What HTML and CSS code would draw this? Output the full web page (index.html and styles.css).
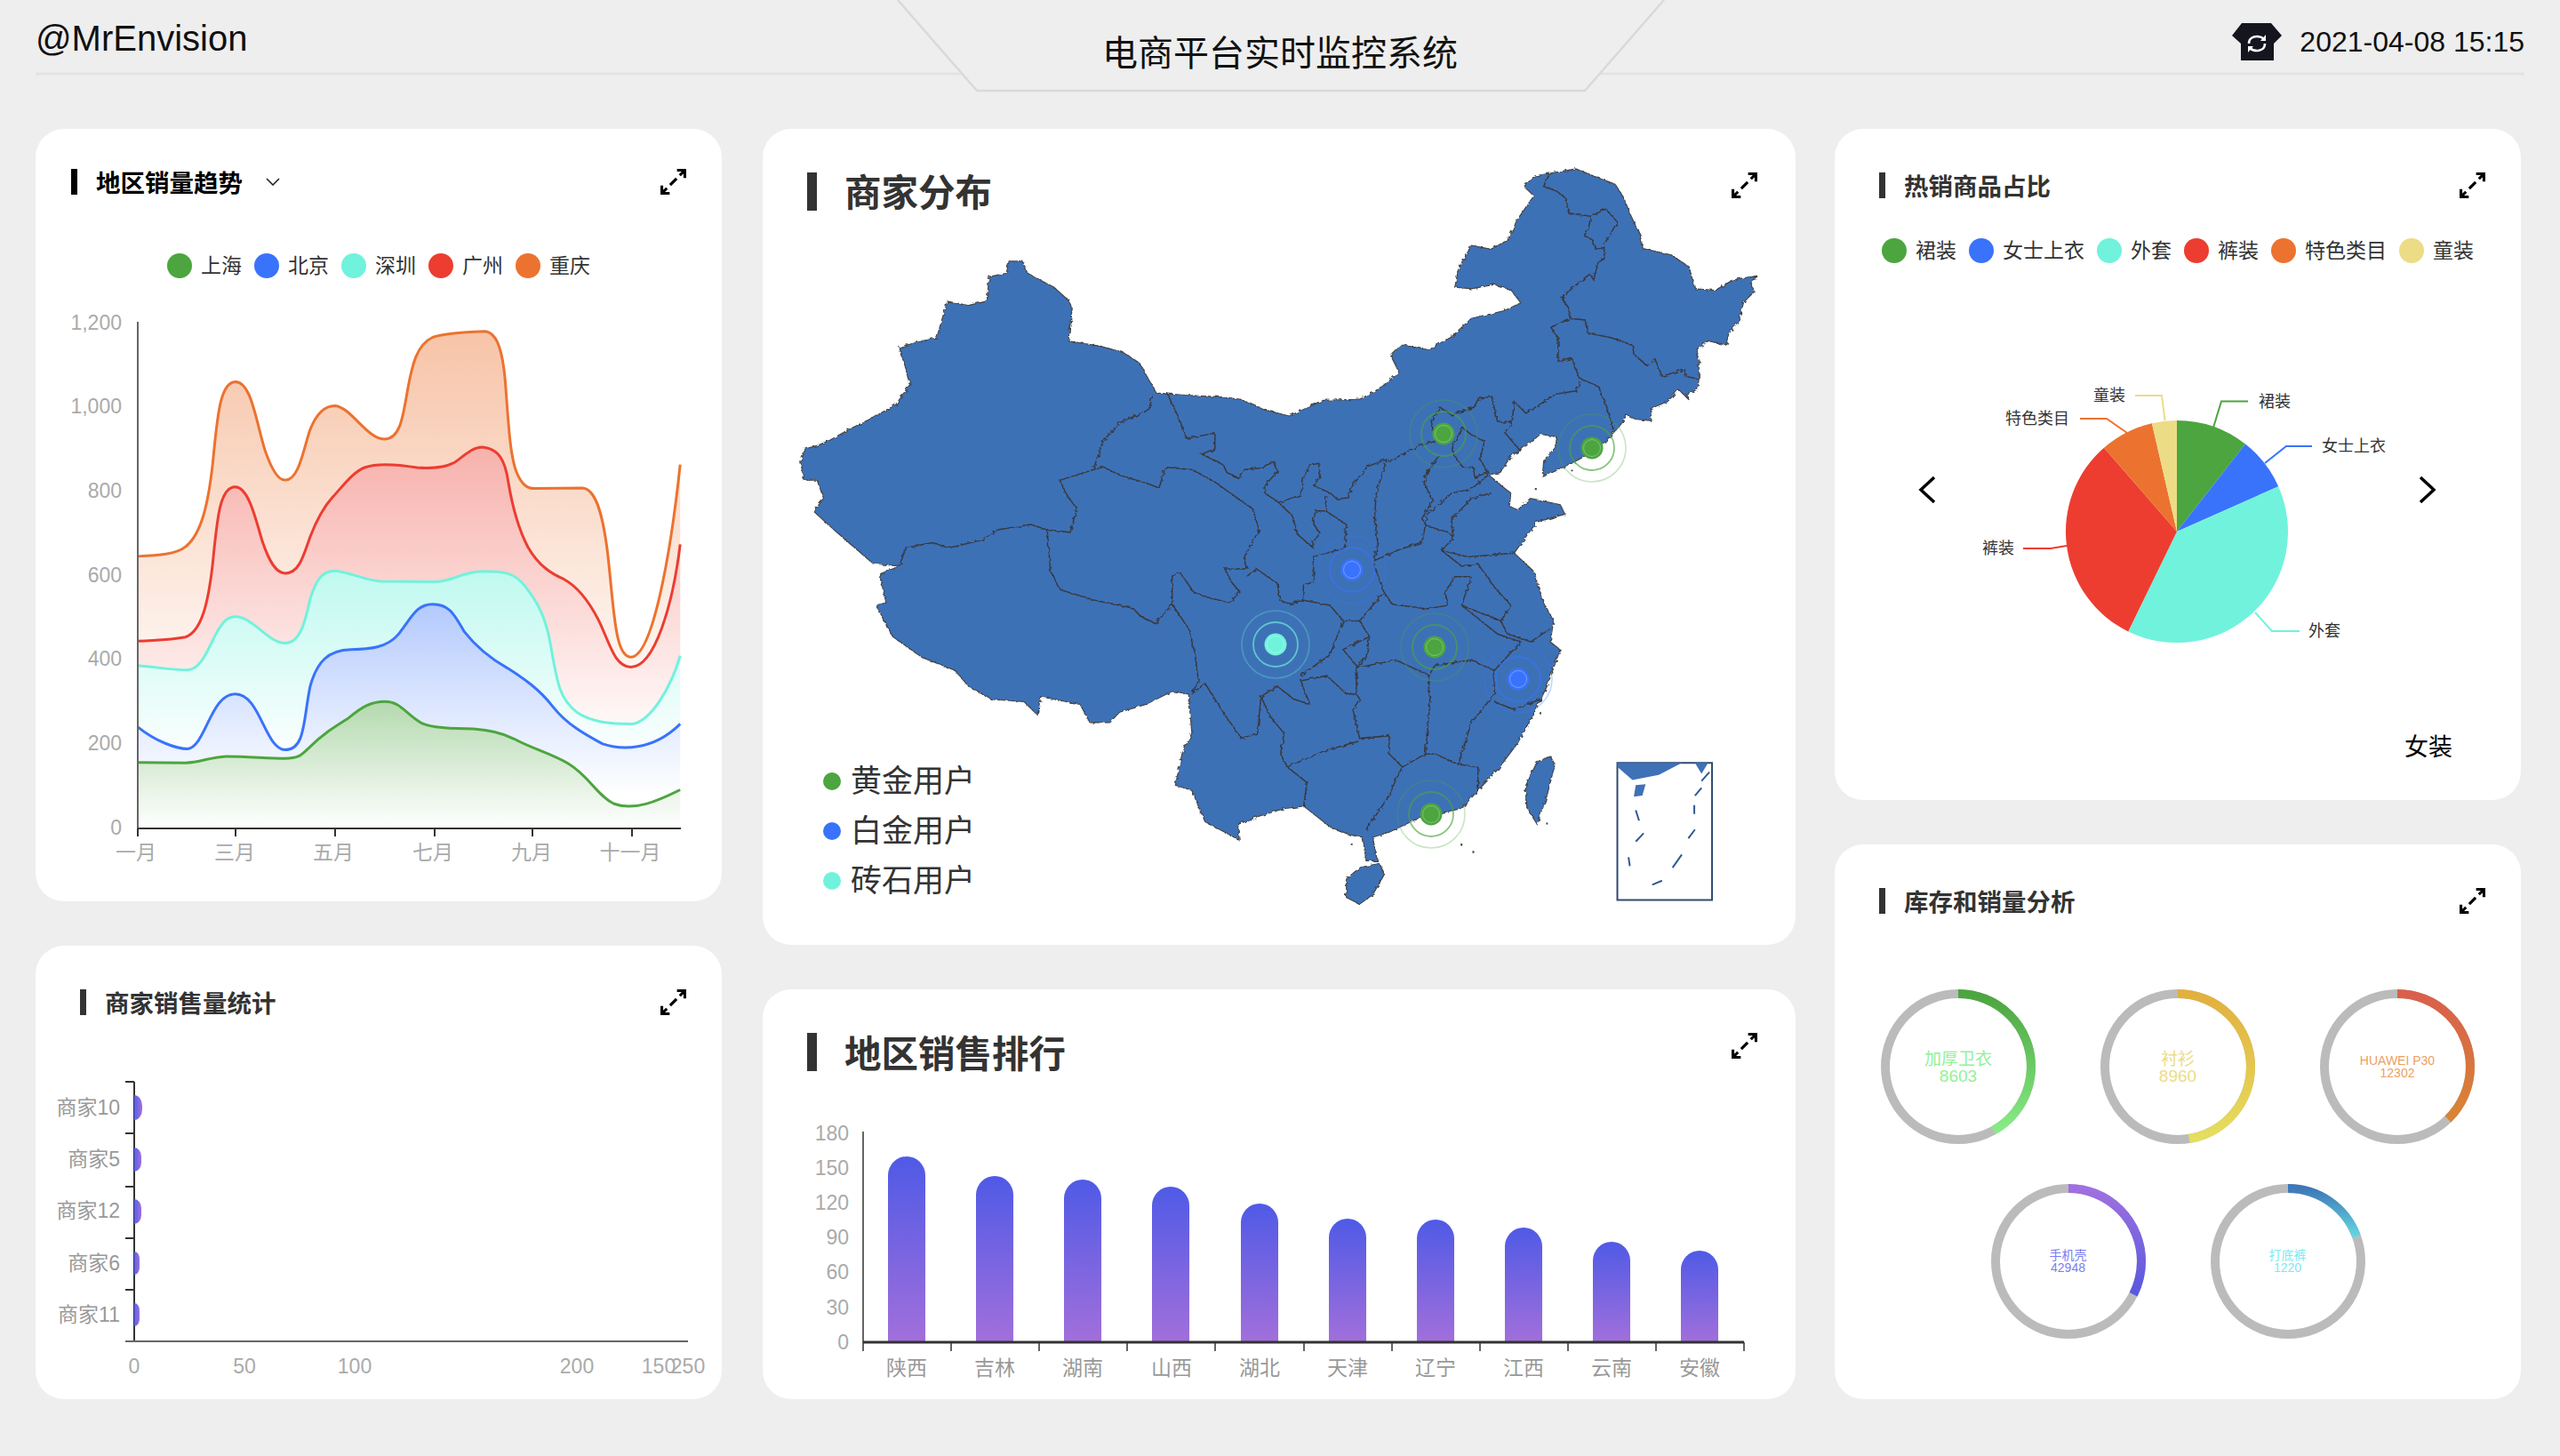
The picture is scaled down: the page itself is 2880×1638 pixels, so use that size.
FILE: index.html
```html
<!DOCTYPE html>
<html lang="zh-CN">

<head>
    <meta charset="UTF-8" />
    <title>电商平台实时监控系统</title>
    <link rel="stylesheet" href="styles.css">
</head>

<body>
    <!-- Shared icons -->
    <svg class="sprite" width="0" height="0">
        <defs>
            <symbol id="icon-expand" viewBox="0 0 28 28">
                <path d="M18 1.500H26.500V10M26 2L21 7M17.500 10.500L10.500 17.500M7 21L2 26M1.500 18V26.500H10" fill="none" stroke="#000" stroke-width="3" />
            </symbol>
            <g id="ripple">
                <circle r="38" fill="none" stroke="currentColor" stroke-width="1.600" opacity=".3" />
                <circle r="25" fill="none" stroke="currentColor" stroke-width="1.800" opacity=".65" />
                <circle r="12.500" fill="currentColor" />
                <circle r="9.500" fill="none" stroke="#fff" stroke-width="1" opacity=".3" />
            </g>
            <filter id="rough" x="-2%" y="-2%" width="104%" height="104%">
                <feTurbulence type="fractalNoise" baseFrequency=".14" numOctaves="2" seed="4" />
                <feDisplacementMap in="SourceGraphic" scale="7" />
            </filter>
        </defs>
    </svg>

    <!-- Top bar -->
    <header class="topbar">
        <svg class="topbar-lines" viewBox="0 0 2880 145">
            <path class="topbar-rule" d="M40 83H1082" />
            <path class="topbar-rule" d="M1800 83H2840" />
            <path class="topbar-frame" d="M1010 0L1099 102H1783L1872 0" />
        </svg>
        <div class="brand">@MrEnvision</div>
        <h1 class="page-title">电商平台实时监控系统</h1>
        <div class="clock">
            <svg class="shirt" viewBox="0 0 56 42">
                <path d="M11 0H44L56 14L47 23V42H10V23L0 14Z" fill="#15151f" />
                <path d="M19 23C19 17 24 15 28 15C31 15 34 16 36 18M37 23C37 29 32 31 28 31C25 31 22 30 20 28" fill="none" stroke="#fff" stroke-width="2.600" />
                <path d="M38 13V20H32Z M18 33V26H24Z" fill="#fff" />
            </svg>
            <span>2021-04-08 15:15</span>
        </div>
    </header>

    <main class="dashboard">
        <!-- Left column -->
        <section class="column">
            <div class="card card-trend">
                <div class="card-head head-black">
                    <h2 class="card-title">地区销量趋势</h2>
                    <svg class="chevron" viewBox="0 0 16 9">
                        <path d="M1 1L8 8L15 1" fill="none" stroke="#222" stroke-width="1.600" />
                    </svg>
                    <svg class="expand"><use href="#icon-expand" /></svg>
                </div>
                <ul class="legend legend-trend">
                    <li><i class="dot green"></i>上海</li>
                    <li><i class="dot blue"></i>北京</li>
                    <li><i class="dot cyan"></i>深圳</li>
                    <li><i class="dot red"></i>广州</li>
                    <li><i class="dot orange"></i>重庆</li>
                </ul>
                <svg class="chart chart-trend" viewBox="40 340 772 650">
                    <defs>
                        <linearGradient id="area-orange" x1="0" y1="0" x2="0" y2="1">
                            <stop offset="0" stop-color="#ec722f" stop-opacity=".42" />
                            <stop offset=".8" stop-color="#ec722f" stop-opacity="0" />
                        </linearGradient>
                        <linearGradient id="area-red" x1="0" y1="0" x2="0" y2="1">
                            <stop offset="0" stop-color="#ec3d30" stop-opacity=".4" />
                            <stop offset=".8" stop-color="#ec3d30" stop-opacity="0" />
                        </linearGradient>
                        <linearGradient id="area-cyan" x1="0" y1="0" x2="0" y2="1">
                            <stop offset="0" stop-color="#71f2dc" stop-opacity=".45" />
                            <stop offset=".75" stop-color="#71f2dc" stop-opacity="0" />
                        </linearGradient>
                        <linearGradient id="area-blue" x1="0" y1="0" x2="0" y2="1">
                            <stop offset="0" stop-color="#3973fb" stop-opacity=".38" />
                            <stop offset=".85" stop-color="#3973fb" stop-opacity="0" />
                        </linearGradient>
                        <linearGradient id="area-green" x1="0" y1="0" x2="0" y2="1">
                            <stop offset="0" stop-color="#4ca53f" stop-opacity=".42" />
                            <stop offset="1" stop-color="#4ca53f" stop-opacity="0" />
                        </linearGradient>
                        <path id="a5" d="M245 864C290 862 330 860 350 845C385 820 400 760 410 680C420 590 425 515 460 514C495 514 505 590 525 650C540 690 555 712 570 711C600 712 610 650 625 610C640 575 660 562 680 562C715 565 750 628 788 629C825 630 830 580 840 530C850 480 860 440 895 425C925 416 975 414 1010 413C1040 415 1050 460 1055 510C1062 590 1065 660 1080 695C1092 722 1105 728 1120 728L1225 727C1255 728 1270 780 1280 850C1295 960 1295 1065 1332 1066C1380 1066 1420 860 1441 680V1409H245Z" />
                        <path id="a4" d="M245 1034C280 1033 320 1031 350 1026C385 1015 400 960 410 880C420 790 425 725 460 725C490 726 505 790 520 835C535 875 550 898 570 898C600 898 610 865 625 825C640 790 655 765 675 745C700 720 720 695 745 686C775 676 820 680 860 686C890 688 920 688 945 675C970 658 985 645 1005 645C1040 648 1055 670 1062 715C1072 770 1085 810 1105 845C1130 885 1160 900 1185 910C1215 925 1240 955 1260 990C1285 1035 1295 1085 1332 1086C1385 1086 1425 960 1441 840V1409H245Z" />
                        <path id="a3" d="M245 1083C285 1086 325 1092 355 1092C385 1090 400 1050 420 1015C435 992 445 985 460 985C500 985 530 1037 570 1038C600 1038 612 1005 625 950C640 905 655 893 680 893C710 895 745 912 780 914L900 915C940 914 960 895 1005 894C1050 894 1075 895 1100 925C1130 960 1145 990 1155 1040C1170 1120 1175 1150 1215 1178C1250 1198 1290 1200 1335 1200C1375 1195 1420 1130 1441 1063V1409H245Z" />
                        <path id="a2" d="M245 1206C285 1235 330 1250 355 1250C395 1245 405 1140 460 1140C515 1140 525 1250 570 1252C615 1252 610 1190 625 1125C640 1075 665 1052 715 1051C755 1050 795 1048 820 1020C850 985 860 960 895 960C935 960 945 985 965 1015C995 1050 1025 1070 1060 1088C1095 1108 1130 1130 1160 1165C1195 1205 1240 1225 1270 1240C1310 1252 1380 1255 1441 1200V1409H245Z" />
                        <path id="a1" d="M245 1277L350 1278C385 1277 400 1267 440 1265C490 1265 530 1269 570 1269C600 1269 605 1262 620 1250C650 1222 680 1205 710 1188C740 1165 760 1155 790 1155C825 1155 835 1180 870 1198C900 1210 950 1209 985 1210C1020 1213 1045 1217 1075 1230C1115 1250 1160 1260 1195 1280C1240 1305 1260 1345 1295 1360C1340 1375 1390 1355 1441 1332V1409H245Z" />
                    </defs>

                    <g transform="translate(30 140) scale(.5102 .5612)">
                        <use href="#a5" fill="#fff" />
                        <use href="#a5" fill="url(#area-orange)" />
                        <path class="series orange-line" d="M245 864C290 862 330 860 350 845C385 820 400 760 410 680C420 590 425 515 460 514C495 514 505 590 525 650C540 690 555 712 570 711C600 712 610 650 625 610C640 575 660 562 680 562C715 565 750 628 788 629C825 630 830 580 840 530C850 480 860 440 895 425C925 416 975 414 1010 413C1040 415 1050 460 1055 510C1062 590 1065 660 1080 695C1092 722 1105 728 1120 728L1225 727C1255 728 1270 780 1280 850C1295 960 1295 1065 1332 1066C1380 1066 1420 860 1441 680" />

                        <use href="#a4" fill="#fff" />
                        <use href="#a4" fill="url(#area-red)" />
                        <path class="series red-line" d="M245 1034C280 1033 320 1031 350 1026C385 1015 400 960 410 880C420 790 425 725 460 725C490 726 505 790 520 835C535 875 550 898 570 898C600 898 610 865 625 825C640 790 655 765 675 745C700 720 720 695 745 686C775 676 820 680 860 686C890 688 920 688 945 675C970 658 985 645 1005 645C1040 648 1055 670 1062 715C1072 770 1085 810 1105 845C1130 885 1160 900 1185 910C1215 925 1240 955 1260 990C1285 1035 1295 1085 1332 1086C1385 1086 1425 960 1441 840" />

                        <use href="#a3" fill="#fff" />
                        <use href="#a3" fill="url(#area-cyan)" />
                        <path class="series cyan-line" d="M245 1083C285 1086 325 1092 355 1092C385 1090 400 1050 420 1015C435 992 445 985 460 985C500 985 530 1037 570 1038C600 1038 612 1005 625 950C640 905 655 893 680 893C710 895 745 912 780 914L900 915C940 914 960 895 1005 894C1050 894 1075 895 1100 925C1130 960 1145 990 1155 1040C1170 1120 1175 1150 1215 1178C1250 1198 1290 1200 1335 1200C1375 1195 1420 1130 1441 1063" />

                        <use href="#a2" fill="#fff" />
                        <use href="#a2" fill="url(#area-blue)" />
                        <path class="series blue-line" d="M245 1206C285 1235 330 1250 355 1250C395 1245 405 1140 460 1140C515 1140 525 1250 570 1252C615 1252 610 1190 625 1125C640 1075 665 1052 715 1051C755 1050 795 1048 820 1020C850 985 860 960 895 960C935 960 945 985 965 1015C995 1050 1025 1070 1060 1088C1095 1108 1130 1130 1160 1165C1195 1205 1240 1225 1270 1240C1310 1252 1380 1255 1441 1200" />

                        <use href="#a1" fill="#fff" />
                        <use href="#a1" fill="url(#area-green)" />
                        <path class="series green-line" d="M245 1277L350 1278C385 1277 400 1267 440 1265C490 1265 530 1269 570 1269C600 1269 605 1262 620 1250C650 1222 680 1205 710 1188C740 1165 760 1155 790 1155C825 1155 835 1180 870 1198C900 1210 950 1209 985 1210C1020 1213 1045 1217 1075 1230C1115 1250 1160 1260 1195 1280C1240 1305 1260 1345 1295 1360C1340 1375 1390 1355 1441 1332" />
                    </g>

                    <path class="axis-y" d="M155 361V931" />
                    <path class="axis-x" d="M155 931H766M155 931V940M265 931V940M377 931V940M489 931V940M599 931V940M711 931V940" />

                    <g class="label-end">
                        <text x="137" y="362">1,200</text>
                        <text x="137" y="456">1,000</text>
                        <text x="137" y="551">800</text>
                        <text x="137" y="646">600</text>
                        <text x="137" y="740">400</text>
                        <text x="137" y="835">200</text>
                        <text x="137" y="930">0</text>
                    </g>
                    <g class="label-mid">
                        <text x="153" y="958">一月</text>
                        <text x="264" y="958">三月</text>
                        <text x="375" y="958">五月</text>
                        <text x="487" y="958">七月</text>
                        <text x="598" y="958">九月</text>
                        <text x="709" y="958">十一月</text>
                    </g>
                </svg>
            </div>

            <div class="card card-sellers">
                <div class="card-head head-inset">
                    <h2 class="card-title">商家销售量统计</h2>
                    <svg class="expand"><use href="#icon-expand" /></svg>
                </div>
                <svg class="chart chart-sellers" viewBox="40 1160 772 400">
                    <defs>
                        <linearGradient id="bar-h" x1="0" y1="0" x2="1" y2="0">
                            <stop offset="0" stop-color="#5660e6" />
                            <stop offset="1" stop-color="#a06fdf" />
                        </linearGradient>
                    </defs>
                    <path class="axis-dark" d="M151 1217V1509M141 1217H151M141 1275H151M141 1335H151M141 1393H151M141 1451H151M141 1509H151" />
                    <path class="axis-gray" d="M141 1509H774" />
                    <path fill="url(#bar-h)" d="M151 1232A9 12 0 0 1 160 1244V1248A9 12 0 0 1 151 1260Z" />
                    <path fill="url(#bar-h)" d="M151 1291A8 10 0 0 1 159 1301V1308A8 10 0 0 1 151 1318Z" />
                    <path fill="url(#bar-h)" d="M151 1349A8 10 0 0 1 159 1359V1367A8 10 0 0 1 151 1377Z" />
                    <path fill="url(#bar-h)" d="M151 1408A6 8 0 0 1 157 1416V1426A6 8 0 0 1 151 1434Z" />
                    <path fill="url(#bar-h)" d="M151 1466A6 8 0 0 1 157 1474V1484A6 8 0 0 1 151 1492Z" />
                    <g class="label-end label-dim">
                        <text x="135" y="1246">商家10</text>
                        <text x="135" y="1304">商家5</text>
                        <text x="135" y="1362">商家12</text>
                        <text x="135" y="1421">商家6</text>
                        <text x="135" y="1479">商家11</text>
                    </g>
                    <g class="label-mid">
                        <text x="151" y="1537">0</text>
                        <text x="275" y="1537">50</text>
                        <text x="399" y="1537">100</text>
                        <text x="649" y="1537">200</text>
                        <text x="741" y="1537">150</text>
                        <text x="774" y="1537">250</text>
                    </g>
                </svg>
            </div>
        </section>

        <!-- Centre column -->
        <section class="column column-mid">
            <div class="card card-map">
                <svg class="map" viewBox="858 145 1162 918">
                    <g transform="translate(860 150) scale(.7398 .5867)">
                        <g filter="url(#rough)">
                            <path class="land" d="M55 630L62 605L82 598L100 588L128 568L165 545L200 520L222 480L205 410L240 398L262 392L278 322L310 330L338 322L342 275L368 268L372 245L392 245L400 268L425 285L440 295L462 320L468 335L462 398L510 408L545 420L570 440L596 498L640 502L690 505L725 510L760 530L798 542L850 512L905 510L935 490L965 458L952 425L968 405L1010 415L1045 390L1075 355L1125 340L1150 325L1135 300L1110 290L1075 298L1050 295L1055 262L1075 215L1105 222L1130 205L1145 165L1170 120L1155 102L1171 82L1194 77L1234 68L1261 82L1293 97L1306 122L1318 159L1331 193L1336 221L1379 233L1406 256L1415 298L1446 301L1473 281L1511 273L1500 284L1505 304L1489 324L1482 358L1466 386L1462 406L1435 398L1417 415L1421 437L1421 471L1419 491L1401 500L1406 511L1390 491L1374 514L1347 528L1349 551L1324 548L1311 540L1302 559L1291 574L1270 602L1239 625L1207 645L1183 659L1185 628L1203 602L1205 582L1180 577L1149 608L1135 619L1119 650L1101 655L1125 680L1135 690L1133 715L1145 722L1165 700L1210 712L1218 730L1175 745L1160 770L1140 805L1170 840L1185 900L1200 935L1195 975L1210 990L1190 1060L1175 1100L1145 1170L1115 1220L1085 1260L1060 1295L1000 1310L950 1340L925 1350L932 1395L915 1395L910 1350L890 1345L860 1330L820 1290L790 1295L750 1310L720 1325L722 1355L700 1340L670 1320L650 1260L625 1250L635 1190L650 1150L645 1075L620 1070L580 1095L540 1110L525 1130L495 1130L480 1095L420 1080L415 1115L395 1090L345 1085L310 1060L290 1030L240 1005L195 965L170 905L185 900L175 845L205 830L165 825L110 765L75 725L90 700L80 665L60 665Z" />
                            <path class="land" d="M1195 1195L1202 1210L1190 1270L1175 1325L1158 1290L1158 1250L1175 1205Z" />
                            <path class="land" d="M935 1400L943 1420L925 1460L905 1478L885 1465L885 1430L905 1408Z" />

                            <!-- Province borders, north to south -->
                            <path class="border" d="M1194 77L1185 102L1205 111L1219 125L1223 153L1257 159L1252 187L1246 196L1259 204L1264 222L1277 219L1277 241L1268 247L1261 281L1255 270L1232 293L1212 315L1223 335L1225 355L1248 358L1252 383L1288 392L1320 406L1322 423L1342 446L1354 432L1365 466L1399 452L1401 466L1421 471" />
                            <path class="border" d="M1257 159L1279 145L1297 170L1277 213" />
                            <path class="border" d="M1225 355L1196 372L1207 392L1207 437L1228 432L1239 469L1243 471L1268 486L1282 528L1291 568" />
                            <path class="border" d="M1241 477L1234 494L1203 500L1158 537L1140 514L1137 554L1126 574L1149 608" />
                            <path class="border" d="M1137 554L1115 554L1106 505L1086 508L1079 525L1045 540L1027 525L1014 551L1020 591L1000 596L948 630" />
                            <path class="border" d="M1045 600L1062 565L1075 578L1095 590L1088 625L1100 650L1080 660L1078 640L1062 640L1050 620Z" />
                            <path class="border" d="M1025 619L1002 659L1012 645L1003 670L1016 704L1000 738L1005 752" />
                            <path class="border" d="M1005 752L1040 765L1048 775L1030 800L1060 830L1085 825L1110 870L1135 905L1120 935L1130 960L1165 975L1195 950" />
                            <path class="border" d="M1005 752L1008 730L1045 690L1075 682L1101 655" />
                            <path class="border" d="M1048 775L1045 740L1075 700L1105 690" />
                            <path class="border" d="M1070 812L1140 805M1030 800L1070 812" />
                            <path class="border" d="M612 498L630 545L642 585L685 575L685 605L665 615L698 636L703 650L721 662L728 645L752 642L775 630L780 648L761 676L761 690L782 708L816 693L820 659L829 636L843 633L845 656L836 676L861 690L870 701L888 699L894 676L917 639L946 625L930 693L928 738L933 790L926 820L966 798L1000 784L1005 752" />
                            <path class="border" d="M782 708L804 735L809 767L834 795L834 784L845 767L834 747L838 724L854 724L854 696" />
                            <path class="border" d="M854 724L885 750L883 790L885 795L843 809L834 812L836 860L820 866L818 895L798 903L784 895L780 863L748 835L734 849" />
                            <path class="border" d="M590 500L585 530L540 555L515 590L500 645L450 665L458 690L475 720L465 765L430 760L405 750L355 760L330 780L280 795L255 785L215 795L205 830" />
                            <path class="border" d="M500 645L515 640L545 658L580 670L600 680L610 640L650 645L683 667L743 721L752 761L730 812L734 835L700 835L710 860L723 880L707 900L680 892L653 880L631 841L620 849L620 903L595 940L572 926L560 910L500 895L450 875L435 840L430 760" />
                            <path class="border" d="M620 903L645 950L655 1000L660 1050L650 1075L670 1055L695 1105L725 1160L750 1150L755 1080L780 1060L805 1085L830 1095L815 1050L855 1040L885 1075L900 1075L905 1085L895 1105L905 1160L950 1155L950 1190L970 1215L1005 1190L1020 1190L1055 1210L1060 1190L1075 1130L1110 1075L1110 1030L1075 1010L1020 1020L1010 1040L1012 1090L1005 1190" />
                            <path class="border" d="M926 824L942 880L955 903L1007 912L1040 905L1035 880L1050 850L1075 850L1060 905L1120 935" />
                            <path class="border" d="M818 895L860 905L880 935L905 935L920 965L880 990L900 1020L900 1075M880 935L860 1000L815 1040" />
                            <path class="border" d="M905 935L942 880M920 965L915 1005L900 1025L960 1010L1012 1040" />
                            <path class="border" d="M1060 905L1115 960L1150 975L1110 1030M1110 1090L1140 1105L1180 1085" />
                            <path class="border" d="M770 1120L790 1150L785 1190L795 1215L850 1185L905 1165M795 1215L825 1245L820 1290M755 1080L770 1120" />
                            <path class="border" d="M970 1215L960 1240L950 1270L915 1335M1055 1210L1085 1215L1085 1260" />
                        </g>

                        <!-- Small islands along the coast -->
                        <path class="islets" d="M1173 680V684M1228 645V648M1210 990V994M1205 1010V1014M1198 1032V1036M1180 1110V1114M1060 1362V1366M1078 1376V1380M1190 1322V1325M893 1362V1365" />

                        <!-- South China Sea inset -->
                        <rect class="inset-box" x="1297" y="1207" width="144" height="263" />
                        <path class="land-flat" d="M1297 1215L1320 1240L1360 1230L1395 1207H1297Z M1415 1207L1425 1228L1435 1207Z M1325 1250L1340 1248L1335 1270L1322 1272Z" />
                        <path class="inset-dash" d="M1425 1242L1437 1225M1425 1255L1415 1270M1414 1288V1305M1415 1335L1405 1352M1395 1383L1381 1408M1365 1433L1350 1441M1314 1388L1316 1405M1325 1298L1330 1318M1337 1342L1325 1358" />
                    </g>

                    <use href="#ripple" x="1624" y="488" class="green-mark" />
                    <use href="#ripple" x="1791" y="504" class="green-mark" />
                    <use href="#ripple" x="1614" y="728" class="green-mark" />
                    <use href="#ripple" x="1610" y="916" class="green-mark" />
                    <use href="#ripple" x="1521" y="641" class="blue-mark" />
                    <use href="#ripple" x="1708" y="764" class="blue-mark" />
                    <use href="#ripple" x="1435" y="725" class="cyan-mark" />
                </svg>

                <div class="card-head head-big">
                    <h2 class="card-title">商家分布</h2>
                    <svg class="expand"><use href="#icon-expand" /></svg>
                </div>

                <ul class="map-legend">
                    <li><i class="dot-sm green"></i>黄金用户</li>
                    <li><i class="dot-sm blue"></i>白金用户</li>
                    <li><i class="dot-sm cyan"></i>砖石用户</li>
                </ul>
            </div>

            <div class="card card-rank">
                <div class="card-head head-big">
                    <h2 class="card-title">地区销售排行</h2>
                    <svg class="expand"><use href="#icon-expand" /></svg>
                </div>
                <svg class="chart chart-rank" viewBox="858 1225 1162 335">
                    <defs>
                        <linearGradient id="bar-v" x1="0" y1="0" x2="0" y2="1">
                            <stop offset="0" stop-color="#4f5ae6" />
                            <stop offset="1" stop-color="#a26fdb" />
                        </linearGradient>
                    </defs>
                    <path fill="url(#bar-v)" d="M999 1511V1323A21 21 0 0 1 1041 1323V1511Z" />
                    <path fill="url(#bar-v)" d="M1098 1511V1345A21 21 0 0 1 1140 1345V1511Z" />
                    <path fill="url(#bar-v)" d="M1197 1511V1349A21 21 0 0 1 1239 1349V1511Z" />
                    <path fill="url(#bar-v)" d="M1296 1511V1357A21 21 0 0 1 1338 1357V1511Z" />
                    <path fill="url(#bar-v)" d="M1396 1511V1376A21 21 0 0 1 1438 1376V1511Z" />
                    <path fill="url(#bar-v)" d="M1495 1511V1393A21 21 0 0 1 1537 1393V1511Z" />
                    <path fill="url(#bar-v)" d="M1594 1511V1394A21 21 0 0 1 1636 1394V1511Z" />
                    <path fill="url(#bar-v)" d="M1693 1511V1403A21 21 0 0 1 1735 1403V1511Z" />
                    <path fill="url(#bar-v)" d="M1792 1511V1419A21 21 0 0 1 1834 1419V1511Z" />
                    <path fill="url(#bar-v)" d="M1891 1511V1429A21 21 0 0 1 1933 1429V1511Z" />
                    <path class="axis-thin" d="M971 1274V1511M971 1511V1521M1070 1511V1521M1169 1511V1521M1268 1511V1521M1367 1511V1521M1467 1511V1521M1566 1511V1521M1665 1511V1521M1764 1511V1521M1863 1511V1521M1962 1511V1521" />
                    <path class="axis-thick" d="M971 1511H1962" />
                    <g class="label-end">
                        <text x="955" y="1276">180</text>
                        <text x="955" y="1315">150</text>
                        <text x="955" y="1354">120</text>
                        <text x="955" y="1393">90</text>
                        <text x="955" y="1432">60</text>
                        <text x="955" y="1472">30</text>
                        <text x="955" y="1511">0</text>
                    </g>
                    <g class="label-mid label-dim">
                        <text x="1020" y="1540">陕西</text>
                        <text x="1119" y="1540">吉林</text>
                        <text x="1218" y="1540">湖南</text>
                        <text x="1318" y="1540">山西</text>
                        <text x="1417" y="1540">湖北</text>
                        <text x="1516" y="1540">天津</text>
                        <text x="1615" y="1540">辽宁</text>
                        <text x="1714" y="1540">江西</text>
                        <text x="1813" y="1540">云南</text>
                        <text x="1912" y="1540">安徽</text>
                    </g>
                </svg>
            </div>
        </section>

        <!-- Right column -->
        <section class="column">
            <div class="card card-pie">
                <div class="card-head">
                    <h2 class="card-title">热销商品占比</h2>
                    <svg class="expand"><use href="#icon-expand" /></svg>
                </div>
                <ul class="legend legend-pie">
                    <li><i class="dot green"></i>裙装</li>
                    <li><i class="dot blue"></i>女士上衣</li>
                    <li><i class="dot cyan"></i>外套</li>
                    <li><i class="dot red"></i>裤装</li>
                    <li><i class="dot orange"></i>特色类目</li>
                    <li><i class="dot yellow"></i>童装</li>
                </ul>
                <svg class="chart chart-pie" viewBox="2064 320 772 560">
                    <path fill="#4ca53f" d="M2449 597V472A125 125 0 0 1 2526 498.500Z" />
                    <path fill="#3973fb" d="M2449 597L2526 498.500A125 125 0 0 1 2563.200 546.200Z" />
                    <path fill="#71f2dc" d="M2449 597L2563.200 546.200A125 125 0 0 1 2394.200 709.400Z" />
                    <path fill="#ec3d30" d="M2449 597L2394.200 709.400A125 125 0 0 1 2367 502.700Z" />
                    <path fill="#ec722f" d="M2449 597L2367 502.700A125 125 0 0 1 2420.900 475.200Z" />
                    <path fill="#ecdc86" d="M2449 597L2420.900 475.200A125 125 0 0 1 2449 472Z" />

                    <polyline class="leader" stroke="#4ca53f" points="2490,480 2499,450.500 2529,450.500" />
                    <polyline class="leader" stroke="#3973fb" points="2548,520 2572,501 2601,501" />
                    <polyline class="leader" stroke="#71f2dc" points="2537,688 2556,709 2587,709" />
                    <polyline class="leader" stroke="#ec3d30" points="2325,613 2307,616 2276,616" />
                    <polyline class="leader" stroke="#ec722f" points="2393,486 2370,470 2340,470" />
                    <polyline class="leader" stroke="#ecdc86" points="2435.500,472 2432,444 2402,444" />

                    <g class="pie-label">
                        <text x="2541" y="451">裙装</text>
                        <text x="2612" y="501">女士上衣</text>
                        <text x="2597" y="709">外套</text>
                    </g>
                    <g class="pie-label pie-label-end">
                        <text x="2266" y="616">裤装</text>
                        <text x="2328" y="470">特色类目</text>
                        <text x="2391" y="444">童装</text>
                    </g>

                    <path class="pager" d="M2176 536L2161 550L2176 564" />
                    <path class="pager" d="M2723 536L2738 550L2723 564" />
                    <text class="pie-page" x="2705" y="840">女装</text>
                </svg>
            </div>

            <div class="card card-stock">
                <div class="card-head">
                    <h2 class="card-title">库存和销量分析</h2>
                    <svg class="expand"><use href="#icon-expand" /></svg>
                </div>
                <div class="rings">
                    <div class="ring ring-big tone-green">
                        <svg viewBox="0 0 174 174">
                            <defs>
                                <linearGradient id="ring-a" x1="1" y1="0" x2="0" y2="0">
                                    <stop offset="0" stop-color="#4ca53f" />
                                    <stop offset="1" stop-color="#8bf08b" />
                                </linearGradient>
                            </defs>
                            <circle class="ring-track" cx="87" cy="87" r="82" />
                            <circle class="ring-value" cx="87" cy="87" r="82" pathLength="360" stroke="url(#ring-a)" stroke-dasharray="151 360" transform="rotate(-90 87 87)" />
                        </svg>
                        <div class="ring-text"><span>加厚卫衣</span><span>8603</span></div>
                    </div>
                    <div class="ring ring-big tone-yellow">
                        <svg viewBox="0 0 174 174">
                            <defs>
                                <linearGradient id="ring-b" x1="1" y1="0" x2="0" y2="0">
                                    <stop offset="0" stop-color="#e2b03e" />
                                    <stop offset="1" stop-color="#e6de5e" />
                                </linearGradient>
                            </defs>
                            <circle class="ring-track" cx="87" cy="87" r="82" />
                            <circle class="ring-value" cx="87" cy="87" r="82" pathLength="360" stroke="url(#ring-b)" stroke-dasharray="171 360" transform="rotate(-90 87 87)" />
                        </svg>
                        <div class="ring-text"><span>衬衫</span><span>8960</span></div>
                    </div>
                    <div class="ring tone-orange">
                        <svg viewBox="0 0 174 174">
                            <defs>
                                <linearGradient id="ring-c" x1="1" y1="0" x2="0" y2="0">
                                    <stop offset="0" stop-color="#d95f4c" />
                                    <stop offset=".85" stop-color="#d88534" />
                                </linearGradient>
                            </defs>
                            <circle class="ring-track" cx="87" cy="87" r="82" />
                            <circle class="ring-value" cx="87" cy="87" r="82" pathLength="360" stroke="url(#ring-c)" stroke-dasharray="136 360" transform="rotate(-90 87 87)" />
                        </svg>
                        <div class="ring-text"><span>HUAWEI P30</span><span>12302</span></div>
                    </div>
                    <div class="ring tone-violet">
                        <svg viewBox="0 0 174 174">
                            <defs>
                                <linearGradient id="ring-d" x1="1" y1="0" x2="0" y2="0">
                                    <stop offset="0" stop-color="#a070e0" />
                                    <stop offset=".75" stop-color="#5558e0" />
                                </linearGradient>
                            </defs>
                            <circle class="ring-track" cx="87" cy="87" r="82" />
                            <circle class="ring-value" cx="87" cy="87" r="82" pathLength="360" stroke="url(#ring-d)" stroke-dasharray="117 360" transform="rotate(-90 87 87)" />
                        </svg>
                        <div class="ring-text"><span>手机壳</span><span>42948</span></div>
                    </div>
                    <div class="ring tone-teal">
                        <svg viewBox="0 0 174 174">
                            <defs>
                                <linearGradient id="ring-e" x1="1" y1="0" x2="0" y2="0">
                                    <stop offset="0" stop-color="#3d78b8" />
                                    <stop offset=".36" stop-color="#68e0e4" />
                                </linearGradient>
                            </defs>
                            <circle class="ring-track" cx="87" cy="87" r="82" />
                            <circle class="ring-value" cx="87" cy="87" r="82" pathLength="360" stroke="url(#ring-e)" stroke-dasharray="70 360" transform="rotate(-90 87 87)" />
                        </svg>
                        <div class="ring-text"><span>打底裤</span><span>1220</span></div>
                    </div>
                </div>
            </div>
        </section>
    </main>
</body>

</html>
```

FILE: styles.css
```css
/* Page */
* {
    box-sizing: border-box;
}

body {
    margin: 0;
    width: 2880px;
    height: 1638px;
    overflow: hidden;
    background-color: #eee;
    color: #333;
    font-family: "Liberation Sans", "Noto Sans CJK SC", sans-serif;
}

ul,
h1,
h2 {
    margin: 0;
    padding: 0;
    font-weight: normal;
}

ul {
    list-style: none;
}

.sprite {
    position: absolute;
}

/* Top bar */
.topbar {
    position: relative;
    height: 145px;
    padding: 0 40px;
    display: grid;
    grid-template-columns: 1fr auto 1fr;
    align-items: start;
    color: #111;
}

.topbar-lines {
    position: absolute;
    left: 0;
    top: 0;
    width: 2880px;
    height: 145px;
}

.topbar-rule {
    fill: none;
    stroke: #e3e3e3;
    stroke-width: 3;
}

.topbar-frame {
    fill: none;
    stroke: #d9d9d9;
    stroke-width: 2.5;
}

.brand {
    position: relative;
    margin-top: 20px;
    font-size: 40px;
    line-height: 46px;
}

.page-title {
    position: relative;
    margin-top: 34px;
    font-size: 40px;
    line-height: 52px;
}

.clock {
    position: relative;
    justify-self: end;
    margin-top: 26px;
    display: flex;
    align-items: center;
    gap: 20px;
    font-size: 32px;
    line-height: 42px;
}

.shirt {
    width: 56px;
    height: 42px;
}

/* Columns */
.dashboard {
    display: flex;
    padding-left: 40px;
}

.column {
    width: 772px;
    display: flex;
    flex-direction: column;
    gap: 50px;
}

.column-mid {
    width: 1162px;
    margin: 0 44px 0 46px;
}

/* Cards */
.card {
    position: relative;
    display: flow-root;
    background: #fff;
    border-radius: 32px;
}

.card-trend {
    height: 869px;
}

.card-sellers {
    height: 510px;
}

.card-map {
    height: 918px;
}

.card-rank {
    height: 461px;
}

.card-pie {
    height: 755px;
}

.card-stock {
    height: 624px;
}

/* Card header */
.card-head {
    position: relative;
    display: flex;
    align-items: center;
    height: 29px;
    margin-top: 49px;
    padding: 0 40px 0 50px;
}

.card-title {
    display: flex;
    align-items: center;
    gap: 21px;
    padding-bottom: 2px;
    font-size: 27.500px;
    font-weight: bold;
    color: #333;
}

.card-title::before {
    content: "";
    width: 7px;
    height: 29px;
    margin-top: 2px;
    background: #333;
}

.expand {
    width: 29px;
    height: 29px;
    margin-left: auto;
}

.chevron {
    width: 16px;
    height: 9px;
    margin-left: 26px;
}

.head-black {
    margin-top: 45px;
    padding-left: 40px;
}

.head-black .card-title {
    color: #000;
}

.head-black .card-title::before {
    background: #000;
}

.head-big {
    height: 43px;
}

.head-big .card-title {
    gap: 31px;
    font-size: 41.500px;
}

.head-big .card-title::before {
    width: 11px;
    height: 43px;
}

.card-map .card-title {
    padding-bottom: 3px;
}

.card-map .card-title::before {
    margin-top: 3px;
}

.head-big .expand {
    align-self: flex-start;
    margin-right: 3px;
}

/* Legends */
.legend {
    display: flex;
    justify-content: center;
    gap: 14px;
    font-size: 23px;
    line-height: 28px;
}

.legend li {
    display: flex;
    align-items: center;
    gap: 10px;
}

.legend-trend {
    margin-top: 66px;
}

.legend-pie {
    margin-top: 45px;
}

.dot {
    width: 28px;
    height: 28px;
    border-radius: 50%;
}

.green {
    background: #4ca53f;
}

.blue {
    background: #3973fb;
}

.cyan {
    background: #71f2dc;
}

.red {
    background: #ec3d30;
}

.orange {
    background: #ec722f;
}

.yellow {
    background: #ecdc86;
}

/* Chart frames */
.chart {
    display: block;
    width: 100%;
}

.chart-trend {
    height: 650px;
    margin-top: 28px;
}

.chart-sellers {
    height: 400px;
    margin-top: 18px;
}

.chart-rank {
    height: 335px;
    margin-top: 19px;
}

.chart-pie {
    height: 560px;
    margin-top: 25px;
}

.chart text {
    font-size: 23px;
    dominant-baseline: central;
}

.label-end text {
    text-anchor: end;
    fill: #aaa;
}

.label-mid text {
    text-anchor: middle;
    fill: #aaa;
}

.label-dim text {
    fill: #999;
}

/* Trend chart */
.series {
    fill: none;
    stroke-width: 3;
    vector-effect: non-scaling-stroke;
}

.orange-line {
    stroke: #ec722f;
}

.red-line {
    stroke: #ec3d30;
}

.cyan-line {
    stroke: #71f2dc;
}

.blue-line {
    stroke: #3973fb;
}

.green-line {
    stroke: #4ca53f;
}

.axis-y,
.axis-gray {
    fill: none;
    stroke: #666;
    stroke-width: 2;
}

.axis-x,
.axis-dark,
.axis-thin {
    fill: none;
    stroke: #333;
    stroke-width: 2;
}

.axis-thin {
    stroke-width: 1.500;
}

.axis-thick {
    fill: none;
    stroke: #333;
    stroke-width: 3;
}

/* Map */
.map {
    position: absolute;
    left: 0;
    top: 0;
    width: 1162px;
    height: 918px;
}

.land {
    fill: #3e71b6;
    stroke: #444;
    stroke-width: 1.200;
    vector-effect: non-scaling-stroke;
}

.border {
    fill: none;
    stroke: #38393f;
    stroke-width: 1.500;
    vector-effect: non-scaling-stroke;
}

.land-flat {
    fill: #3e71b6;
}

.islets {
    fill: none;
    stroke: #444;
    stroke-width: 2;
    vector-effect: non-scaling-stroke;
}

.inset-box {
    fill: none;
    stroke: #2f4a6f;
    stroke-width: 2;
    vector-effect: non-scaling-stroke;
}

.inset-dash {
    fill: none;
    stroke: #2f5a92;
    stroke-width: 2;
    vector-effect: non-scaling-stroke;
}

.green-mark {
    color: #4ca53f;
}

.blue-mark {
    color: #3973fb;
}

.cyan-mark {
    color: #71f2dc;
}

.map-legend {
    position: absolute;
    left: 68px;
    top: 710px;
    display: flex;
    flex-direction: column;
    gap: 8px;
    font-size: 35px;
    line-height: 48px;
}

.map-legend li {
    display: flex;
    align-items: center;
    gap: 11px;
}

.dot-sm {
    width: 20px;
    height: 20px;
    border-radius: 50%;
}

/* Pie */
.leader {
    fill: none;
    stroke-width: 2;
}

.chart .pie-label text {
    font-size: 18px;
    fill: #333;
}

.pie-label-end text {
    text-anchor: end;
}

.pager {
    fill: none;
    stroke: #000;
    stroke-width: 3.500;
}

.chart .pie-page {
    font-size: 27px;
    fill: #000;
}

/* Stock rings */
.rings {
    width: 668px;
    margin: 85px auto 0;
    display: flex;
    flex-wrap: wrap;
    justify-content: center;
    gap: 45px 73px;
}

.ring {
    position: relative;
    width: 174px;
    height: 174px;
}

.ring svg {
    display: block;
    width: 174px;
    height: 174px;
}

.ring-track,
.ring-value {
    fill: none;
    stroke-width: 10;
}

.ring-track {
    stroke: #bbb;
}

.ring-text {
    position: absolute;
    left: 0;
    top: 0;
    width: 174px;
    height: 174px;
    display: flex;
    flex-direction: column;
    align-items: center;
    justify-content: center;
    font-size: 14px;
    line-height: 14px;
}

.ring-big .ring-text {
    font-size: 19px;
    line-height: 19px;
    padding-top: 2px;
}

.tone-green {
    color: #93f199;
}

.tone-yellow {
    color: #ecdc86;
}

.tone-orange {
    color: #eb9f5f;
}

.tone-violet {
    color: #7b7cf0;
}

.tone-teal {
    color: #7ce9ef;
}
```
